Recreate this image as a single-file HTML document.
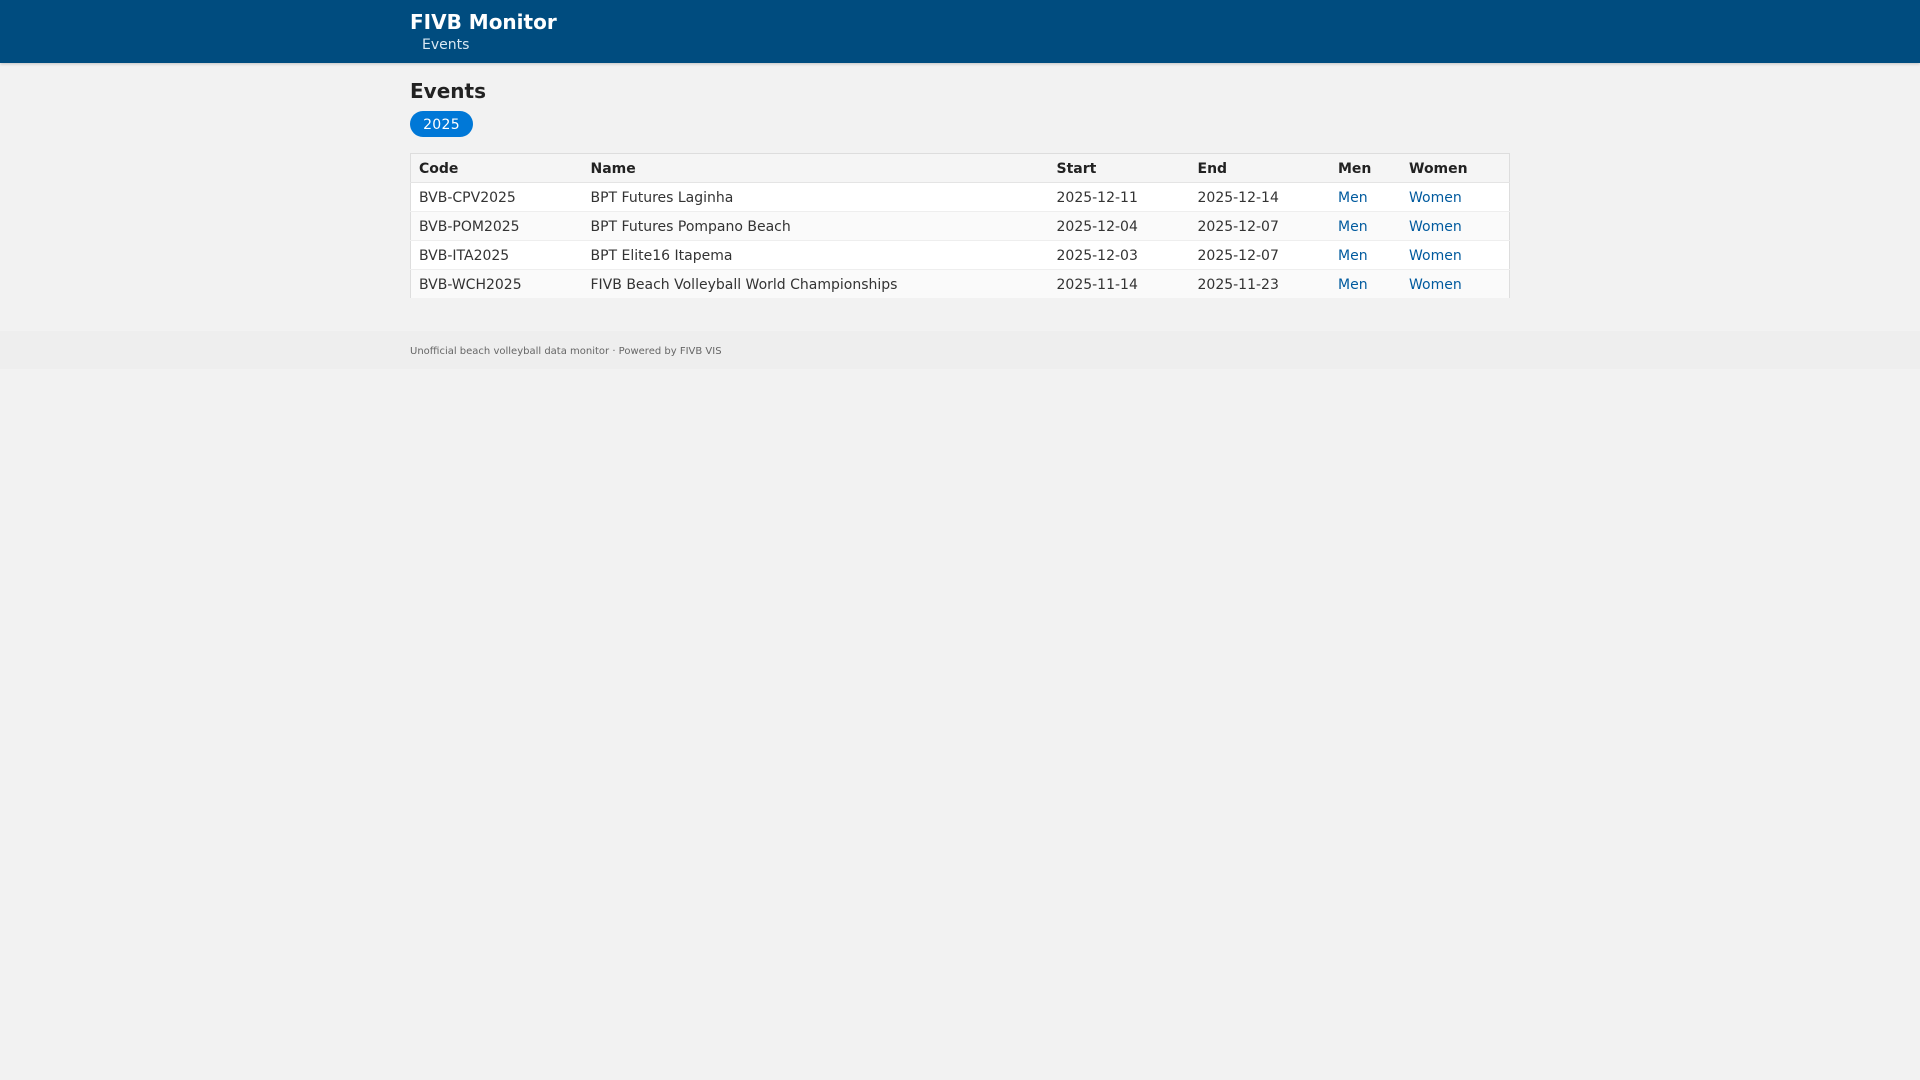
<!DOCTYPE html>
<html lang="en">
<head>
<meta charset="utf-8">
<title>FIVB Monitor - Events</title>
<style>
* { box-sizing: border-box; }
html, body { margin: 0; padding: 0; }
body { width: 1920px; height: 1080px; background: #f2f2f2; color: #222; font-family: "DejaVu Sans", sans-serif; font-size: 14px; overflow: hidden; position: relative; }
header { position: absolute; left: 0; top: 0; width: 1920px; height: 63px; background: #004c7f; box-shadow: 0 1px 3px rgba(0,0,0,.2); }
.brand { position: absolute; left: 410px; top: 9px; font-size: 20px; line-height: 26px; font-weight: 700; color: #fff; white-space: nowrap; }
.nav { position: absolute; left: 422px; top: 36px; font-size: 14px; line-height: 18px; color: #d9e8f3; }
h1 { position: absolute; left: 410px; top: 78px; margin: 0; font-size: 20px; line-height: 26px; font-weight: 700; color: #222; }
.pill { position: absolute; left: 410px; top: 111px; width: 63px; height: 26px; border-radius: 13px; background: #0078d7; color: #fff; font-size: 14px; letter-spacing: .3px; padding-top: 1px; line-height: 26px; text-align: center; }
table { position: absolute; left: 410px; top: 153px; width: 1100px; border-collapse: collapse; table-layout: fixed; background: #fff; border-top: 1px solid #ddd; border-left: 1px solid #ddd; border-right: 1px solid #ddd; }
th, td { height: 29px; padding: 1px 8px 0; text-align: left; white-space: nowrap; font-size: 14px; border-bottom: 1px solid #eee; }
td { color: #333; }
th { background: #f5f5f5; font-weight: 700; color: #222; border-bottom: 1px solid #e4e4e4; }
tbody tr:nth-child(even) td { background: #fafafa; }
tbody tr:last-child td { border-bottom: 0; height: 28px; padding-top: 2px; }
a { color: #005a9e; text-decoration: none; }
footer { position: absolute; left: 0; top: 331px; width: 1920px; height: 38px; background: #eee; }
footer span { position: absolute; left: 410px; top: 14px; font-size: 10px; line-height: 14px; color: #666; white-space: nowrap; }
</style>
</head>
<body>
<header>
  <div class="brand">FIVB Monitor</div>
  <div class="nav">Events</div>
</header>
<h1>Events</h1>
<div class="pill">2025</div>
<table>
  <colgroup>
    <col style="width:172px">
    <col style="width:466px">
    <col style="width:141px">
    <col style="width:140.5px">
    <col style="width:71px">
    <col>
  </colgroup>
  <thead>
    <tr><th>Code</th><th>Name</th><th>Start</th><th>End</th><th>Men</th><th>Women</th></tr>
  </thead>
  <tbody>
    <tr><td>BVB-CPV2025</td><td>BPT Futures Laginha</td><td>2025-12-11</td><td>2025-12-14</td><td><a href="#">Men</a></td><td><a href="#">Women</a></td></tr>
    <tr><td>BVB-POM2025</td><td>BPT Futures Pompano Beach</td><td>2025-12-04</td><td>2025-12-07</td><td><a href="#">Men</a></td><td><a href="#">Women</a></td></tr>
    <tr><td>BVB-ITA2025</td><td>BPT Elite16 Itapema</td><td>2025-12-03</td><td>2025-12-07</td><td><a href="#">Men</a></td><td><a href="#">Women</a></td></tr>
    <tr><td>BVB-WCH2025</td><td>FIVB Beach Volleyball World Championships</td><td>2025-11-14</td><td>2025-11-23</td><td><a href="#">Men</a></td><td><a href="#">Women</a></td></tr>
  </tbody>
</table>
<footer><span>Unofficial beach volleyball data monitor · Powered by FIVB VIS</span></footer>
</body>
</html>
